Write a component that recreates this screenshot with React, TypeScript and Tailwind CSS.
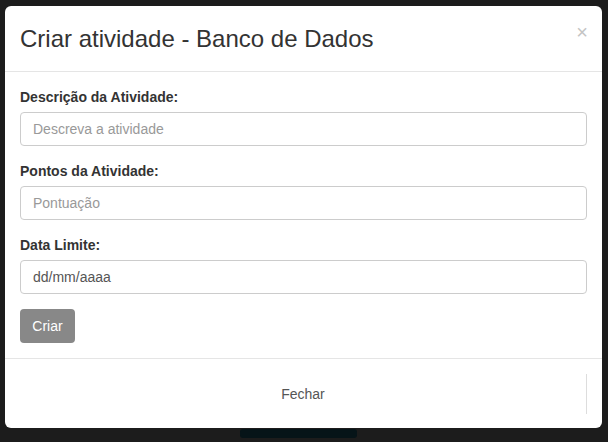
import React from "react";

export default function App() {
  return (
    <div
      className="relative w-[608px] h-[442px] overflow-hidden bg-[#1c1c1c]"
      style={{ fontFamily: '"Liberation Sans", Arial, sans-serif' }}
    >
      {/* background content behind the backdrop */}
      <div className="absolute left-[240px] top-[429px] w-[117px] h-[9px] rounded-[3px] bg-[#061418]" />

      {/* modal */}
      <div className="absolute left-[5px] top-[6px] w-[597px] h-[422px] bg-white rounded-[6px] flex flex-col">
        <div className="relative h-[66px] px-[15px] flex items-center border-b border-[#e5e5e5]">
          <h4 className="text-[24px] leading-none text-[#333] pt-[1px]">Criar atividade - Banco de Dados</h4>
          <span className="absolute right-[14px] top-[16px] text-[20px] font-normal leading-none text-[#c4c4c4]">
            ×
          </span>
        </div>
        <div className="px-[15px] pt-[15px] pb-[15px] text-[14px] text-[#333]">
          <div className="mb-[15px]">
            <label className="block font-bold leading-[20px] mb-[5px]">Descrição da Atividade:</label>
            <div className="h-[34px] border border-[#ccc] rounded-[4px] px-[12px] flex items-center text-[#999]">
              Descreva a atividade
            </div>
          </div>
          <div className="mb-[15px]">
            <label className="block font-bold leading-[20px] mb-[5px]">Pontos da Atividade:</label>
            <div className="h-[34px] border border-[#ccc] rounded-[4px] px-[12px] flex items-center text-[#999]">
              Pontuação
            </div>
          </div>
          <div className="mb-[15px]">
            <label className="block font-bold leading-[20px] mb-[5px]">Data Limite:</label>
            <div className="h-[34px] border border-[#ccc] rounded-[4px] px-[12px] flex items-center text-[#555]">
              dd/mm/aaaa
            </div>
          </div>
          <div className="w-[55px] h-[34px] rounded-[4px] bg-[#888] text-white flex items-center justify-center">
            Criar
          </div>
        </div>
        <div className="border-t border-[#e5e5e5] px-[15px] pt-[15px]">
          <div className="h-[40px] border-r border-[#ddd] flex items-center justify-center text-[14px] text-[#555]">
            Fechar
          </div>
        </div>
      </div>
    </div>
  );
}
